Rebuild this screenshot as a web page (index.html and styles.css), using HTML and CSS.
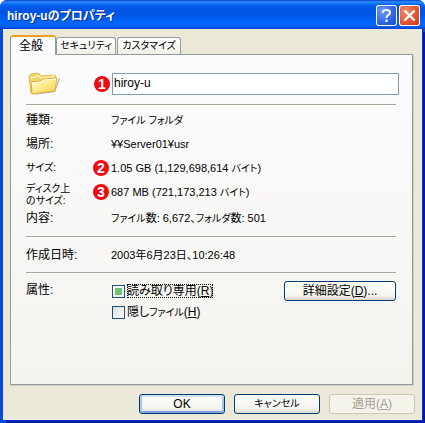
FILE: index.html
```html
<!DOCTYPE html>
<html lang="ja">
<head>
<meta charset="utf-8">
<meta name="viewport" content="width=device-width, initial-scale=1">
<title>hiroy-uのプロパティ</title>
<link rel="stylesheet" href="styles.css">
</head>
<body>
<main class="window">
  <header class="titlebar">
    <h1 class="title">hiroy-uのプロパティ</h1>
    <button class="caption help" type="button" aria-label="ヘルプ">
      <svg viewBox="0 0 21 21" width="21" height="21" aria-hidden="true"><path d="M7 8V6.500Q7.500 5 10.500 5Q14 5 14 7.500Q14 9 12 10.200Q10.500 11 10.500 13M10.500 14.500V17" fill="none" stroke="#fff" stroke-width="2"/></svg>
    </button>
    <button class="caption close" type="button" aria-label="閉じる">
      <svg viewBox="0 0 21 21" width="21" height="21" aria-hidden="true"><path d="M5.500 5.500L15.500 15.500M15.500 5.500L5.500 15.500" fill="none" stroke="#fff" stroke-width="2.400"/></svg>
    </button>
  </header>
  <div class="body">
    <div class="tabs" role="tablist">
      <button class="tab active" type="button" role="tab" aria-selected="true">全般</button>
      <button class="tab security" type="button" role="tab" aria-selected="false">セキュリティ</button>
      <button class="tab custom" type="button" role="tab" aria-selected="false">カスタマイズ</button>
    </div>
    <section class="panel" role="tabpanel">
      <div class="name-row">
        <svg class="folder" viewBox="0 0 34 28" width="34" height="28" aria-hidden="true">
          <defs>
            <linearGradient id="front" x1="0" y1="0" x2="1" y2="1">
              <stop offset="0" stop-color="#fffbd0"/>
              <stop offset="0.500" stop-color="#ffeb8c"/>
              <stop offset="1" stop-color="#f4c64c"/>
            </linearGradient>
          </defs>
          <path d="M5 25L27 22L32 9L31 8L27 20Z" fill="#8c8c86" opacity="0.700"/>
          <path d="M3 23L1 7L3 4L10 3L13 6L27 5L28 9L26 20Z" fill="#f5d66e" stroke="#dfb545"/>
          <path d="M2 8L11 6L13 8L27 6" fill="none" stroke="#fff4b4" stroke-width="1.500"/>
          <path d="M3 12L12 11L15 9L29 8L27 21L4 24Z" fill="url(#front)" stroke="#e3ac35"/>
          <path d="M4 13L13 12L16 10L28 9" fill="none" stroke="#fffde8"/>
        </svg>
        <label class="badge" for="name" aria-label="名前 1"><svg viewBox="0 0 16 16" width="16" height="16" aria-hidden="true"><circle cx="8" cy="8" r="8" fill="#f00a12"/></svg><b>1</b></label>
        <input class="name" id="name" type="text" value="hiroy-u" spellcheck="false">
      </div>
      <dl class="group details">
        <dt>種類:</dt><dd><span class="kana">ファイル フォルダ</span></dd>
        <dt>場所:</dt><dd>¥¥Server01¥usr</dd>
        <dt class="kana">サイズ:</dt><dd><span class="badge hang"><svg viewBox="0 0 16 16" width="16" height="16" aria-hidden="true"><circle cx="8" cy="8" r="8" fill="#f00a12"/></svg><b>2</b></span>1.05 GB (1,129,698,614 <span class="kana">バイト</span>)</dd>
        <dt class="kana two-line">ディスク上<br>のサイズ:</dt><dd><span class="badge hang"><svg viewBox="0 0 16 16" width="16" height="16" aria-hidden="true"><circle cx="8" cy="8" r="8" fill="#f00a12"/></svg><b>3</b></span>687 MB (721,173,213 <span class="kana">バイト</span>)</dd>
        <dt class="last">内容:</dt><dd class="last"><span class="kana">ファイル</span>数: 6,672、<span class="kana">フォルダ</span>数: 501</dd>
      </dl>
      <dl class="group created">
        <dt>作成日時:</dt><dd>2003年6月23日、10:26:48</dd>
      </dl>
      <div class="group attributes">
        <span class="attr-label" id="attributes">属性:</span>
        <div class="checks" role="group" aria-labelledby="attributes">
          <label class="check"><input type="checkbox" class="mixed" aria-checked="mixed"><span class="text focus">読み取り専用(<u>R</u>)</span></label>
          <label class="check"><input type="checkbox"><span class="text">隠し<span class="kana">ファイル</span>(<u>H</u>)</span></label>
        </div>
        <button class="button advanced" type="button">詳細設定(<u>D</u>)...</button>
      </div>
    </section>
    <footer class="actions">
      <button class="button default" type="button">OK</button>
      <button class="button kana" type="button">キャンセル</button>
      <button class="button" type="button" disabled>適用(<u>A</u>)</button>
    </footer>
  </div>
</main>
</body>
</html>
```
FILE: styles.css
```css
* {
  box-sizing: border-box;
}

body {
  margin: 0;
  background: #fff;
  color: #000;
  font-family: "Liberation Sans", "Noto Sans CJK JP", sans-serif;
  font-size: 12px;
  line-height: 12px;
  font-feature-settings: "palt";
}

button,
input {
  margin: 0;
  color: inherit;
  font: inherit;
  font-feature-settings: inherit;
}

.kana {
  font-size: 10px;
}

.window {
  display: flex;
  flex-direction: column;
  min-height: 100vh;
  overflow: hidden;
  border-radius: 7px 7px 0 0;
  background: #0a49dc;
}

.titlebar {
  display: flex;
  align-items: center;
  gap: 2px;
  height: 29px;
  padding: 2px 5px 0 7px;
  background: linear-gradient(#0842c8 0, #2f8cff 2px, #0a6cf4 4px, #0055e5 8px, #0054e3 14px, #0066ff 22px, #0064fa 26px, #003dd0 29px);
}

.title {
  flex: 1;
  margin: 0;
  color: #fff;
  font-size: 12px;
  line-height: 16px;
  text-shadow: 1px 1px #0b2f91;
}

.caption {
  width: 21px;
  height: 21px;
  padding: 0;
  overflow: hidden;
  border: 0;
  border-radius: 3px;
  box-shadow: inset 0 0 0 1px #fff;
}

.caption svg {
  display: block;
}

.help {
  background: radial-gradient(circle at 30% 30%, #6d9cf8, #2c60e4 60%, #1746d0);
}

.close {
  background: radial-gradient(circle at 30% 30%, #f08a6c, #e2502c 60%, #c4320c);
}

.body {
  flex: 1;
  display: flex;
  flex-direction: column;
  margin: 0 3px 3px;
  padding: 5px 9px 6px 7px;
  background: #ece9d8;
  box-shadow: 1px 1px #0831d9, 3px 3px #0019a0;
}

.tabs {
  display: flex;
  align-items: flex-end;
  height: 20px;
}

.tab {
  height: 17px;
  margin-right: 1px;
  padding: 0;
  border: 1px solid #919b9c;
  border-bottom: 0;
  border-radius: 3px 3px 0 0;
  background: linear-gradient(#fff, #f0f0ea);
}

.tab.active {
  position: relative;
  width: 46px;
  height: 20px;
  margin: 0 0 -1px;
  padding-right: 4px;
  border-top: 2px solid #f0a020;
  background: #fcfcfe;
}

.tab.security,
.tab.custom {
  width: 60px;
  font-size: 10px;
}

.tab.custom {
  width: 64px;
}

.panel {
  flex: 1;
  padding: 18px 13px 16px 15px;
  border: 1px solid #919b9c;
  background: linear-gradient(#fcfcfe, #f4f3ee);
  box-shadow: 1px 1px #d0cebf;
}

.name-row {
  display: flex;
  align-items: center;
  height: 22px;
  margin-bottom: 9px;
}

.folder {
  flex: none;
  margin: 0 32px 0 2px;
}

.badge {
  display: grid;
  flex: none;
  width: 16px;
  height: 16px;
  margin-right: 2px;
  color: #fff;
  font-size: 14px;
  line-height: 16px;
  text-align: center;
}

.badge svg,
.badge b {
  grid-area: 1 / 1;
}

.hang {
  position: absolute;
  top: -2px;
  left: -18px;
}

.name {
  flex: 1;
  min-width: 0;
  height: 22px;
  padding: 0 1px 2px;
  border: 1px solid #7f9db9;
  outline: 0;
  background: #fff;
}

.group {
  margin: 0 3px 0 0;
  border-top: 1px solid #aca899;
  box-shadow: inset 0 1px #fff;
}

.details,
.created {
  display: grid;
  grid-template-columns: 85px 1fr;
}

.details {
  grid-template-rows: repeat(4, 24px) 26px;
  padding: 9px 0 0;
}

.created {
  height: 36px;
  padding-top: 12px;
}

.details dt.last,
.details dd.last {
  padding-top: 2px;
}

dt,
dd {
  margin: 0;
}

dd {
  position: relative;
  font-size: 11px;
  white-space: nowrap;
}

.two-line {
  margin-top: -3px;
}

.attributes {
  display: grid;
  grid-template-columns: 86px 1fr 112px;
  padding-top: 8px;
}

.attr-label {
  padding-top: 3px;
}

.checks {
  display: grid;
  gap: 5px;
  align-content: start;
  padding-top: 2px;
}

.check {
  display: flex;
  align-items: center;
  gap: 2px;
  height: 16px;
  white-space: nowrap;
}

.check input {
  appearance: none;
  flex: none;
  width: 13px;
  height: 13px;
  border: 1px solid #1c5180;
  background: linear-gradient(135deg, #dcdcd7, #fff);
}

.check .mixed {
  background: linear-gradient(#73c273, #73c273) center / 7px 7px no-repeat, #f6f6f2;
}

.text {
  line-height: 14px;
}

.focus {
  outline: 1px dotted #000;
  outline-offset: -1px;
}

.button {
  height: 20px;
  padding: 0;
  border: 1px solid #003c74;
  border-radius: 3px;
  background: linear-gradient(#fff, #f4f3ee 75%, #dcd8cc);
}

.default {
  box-shadow: inset 0 2px #cee0fb, inset 2px 0 #a7c3f0, inset -2px 0 #a7c3f0, inset 0 -2px #7ba0e4;
}

.button:disabled {
  border-color: #c9c7ba;
  background: #f5f4ea;
  color: #a1a192;
}

.actions {
  display: grid;
  grid-template-columns: repeat(3, 86px);
  justify-content: end;
  gap: 9px;
  margin-right: -2px;
  padding-top: 9px;
}
```
